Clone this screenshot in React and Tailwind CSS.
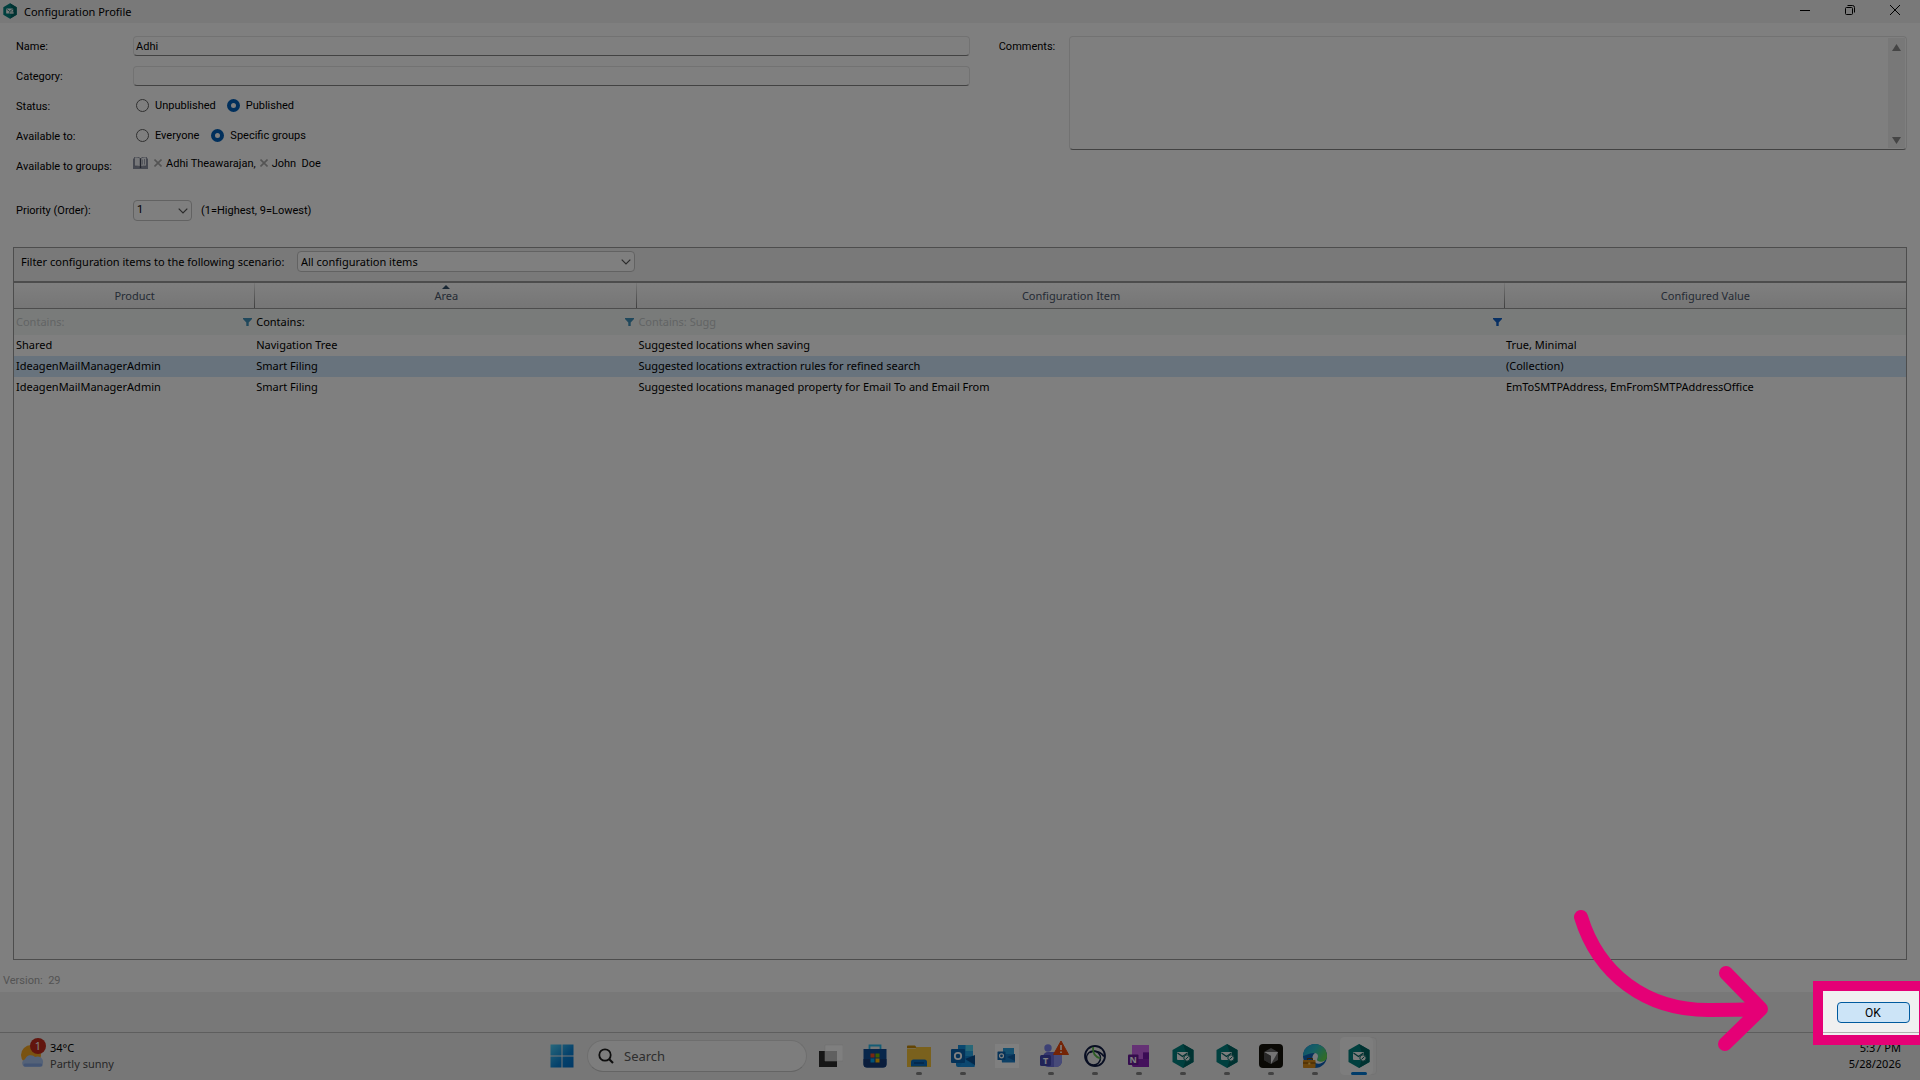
import React from "react";

const FONT = "font-['Noto_Sans','Open_Sans',sans-serif]";
const FORM = "font-['Roboto','Liberation_Sans',Arial,sans-serif]";

function HexLogo({ className, detailed = true }) {
  return (
    <svg viewBox="0 0 22 24" className={className} aria-hidden="true">
      <path d="M11 0 21.500 6v12L11 24 .5 18V6z" fill="#00807e" />
      <path d="M11 0 21.500 6v12L11 24l4-12z" fill="#006463" />
      <rect x="5" y="8" width="11" height="8" rx="1" fill="#f4f8f8" />
      <path d="m5.500 9 5 3.600L15.500 9" fill="none" stroke="#006463" strokeWidth="1.200" />
      {detailed && (
        <>
          <circle cx="15" cy="14" r="3.200" fill="#f4f8f8" stroke="#006463" strokeWidth="1" />
          <path d="m13.400 15.500 3.200-3" stroke="#006463" strokeWidth="1" />
        </>
      )}
      {!detailed && <path d="M10 13.500h7v3h-7z" fill="#f4f8f8" stroke="#006463" strokeWidth=".8" />}
    </svg>
  );
}

function Funnel({ className }) {
  return (
    <svg viewBox="0 0 9 8" className={className} aria-hidden="true">
      <path d="M0 0h9v1L5.700 4.500V8H3.300V4.500L0 1z" fill="currentColor" />
    </svg>
  );
}

function Chevron({ className }) {
  return (
    <svg viewBox="0 0 10 6" className={className} aria-hidden="true">
      <path d="m.7.7 4.300 4.300L9.300.7" fill="none" stroke="currentColor" strokeWidth="1.200" />
    </svg>
  );
}

function Radio({ name, label, defaultChecked }) {
  return (
    <label className="flex items-center gap-1.5">
      <input
        type="radio"
        name={name}
        defaultChecked={defaultChecked}
        className="size-[13px] appearance-none rounded-full border border-[#606060] bg-white checked:border-4 checked:border-[#005fb8]"
      />
      <span className="pt-0.5">{label}</span>
    </label>
  );
}

function TitleBar() {
  return (
    <header className="flex h-[23px] items-start bg-[#f2f2f2] text-[11px] text-black">
      <HexLogo className="mt-[3px] ml-[3px] h-4 w-[14px]" detailed={false} />
      <h1 className="ml-[7px] flex-1 leading-6">Configuration Profile</h1>
      <button aria-label="Minimize" className="grid h-5 w-[45px] place-items-center">
        <svg viewBox="0 0 10 10" className="size-2.5"><path d="M0 5.500h10" stroke="black" /></svg>
      </button>
      <button aria-label="Restore" className="grid h-5 w-[45px] place-items-center">
        <svg viewBox="0 0 10 10" className="size-2.5" fill="none" stroke="black">
          <rect x=".5" y="2.500" width="7" height="7" rx="1" />
          <path d="M2.500.5h5a2 2 0 0 1 2 2v5" />
        </svg>
      </button>
      <button aria-label="Close" className="mr-[3px] grid h-5 w-[45px] place-items-center">
        <svg viewBox="0 0 10 10" className="size-2.5"><path d="m0 0 10 10M10 0 0 10" stroke="black" /></svg>
      </button>
    </header>
  );
}

const FIELD = "h-5 w-full rounded-sm border border-[#e4e4e4] border-b-[#858585] bg-white px-0.5 outline-none";
const LABEL = "w-[117px] shrink-0 pt-0.5";

function Remove({ label }) {
  return (
    <button type="button" aria-label={label}>
      <svg viewBox="0 0 8 8" className="size-2"><path d="m.5.5 7 7M7.500.5l-7 7" stroke="#a8a8a8" strokeWidth="1.600" /></svg>
    </button>
  );
}

function ProfileForm() {
  return (
    <form className={`flex gap-[29px] pt-[13px] pr-[13px] text-[11px] text-black ${FORM}`}>
      <div className="min-w-0 flex-[21] pl-4">
        <div className="flex h-5 items-center">
          <label htmlFor="name" className={LABEL}>Name:</label>
          <input id="name" defaultValue="Adhi" className={FIELD} />
        </div>
        <div className="mt-2.5 flex h-5 items-center">
          <label htmlFor="category" className={LABEL}>Category:</label>
          <input id="category" className={FIELD} />
        </div>
        <div role="radiogroup" aria-label="Status" className="mt-2.5 flex h-5 items-center">
          <span className={LABEL}>Status:</span>
          <div className="flex gap-[11px] pb-0.5 pl-[3px]">
            <Radio name="status" label="Unpublished" />
            <Radio name="status" label="Published" defaultChecked />
          </div>
        </div>
        <div role="radiogroup" aria-label="Available to" className="mt-2.5 flex h-5 items-center">
          <span className={LABEL}>Available to:</span>
          <div className="flex gap-3 pb-0.5 pl-[3px]">
            <Radio name="audience" label="Everyone" />
            <Radio name="audience" label="Specific groups" defaultChecked />
          </div>
        </div>
        <div className="mt-2.5 flex h-5 items-center">
          <span className={LABEL}>Available to groups:</span>
          <div className="flex items-center pb-1.5">
            <button type="button" aria-label="Browse groups" className="mr-1.5">
              <svg viewBox="0 0 15 12" className="h-3 w-[15px]">
                <path d="M0 1.500h15V12H0z" fill="#8d93a3" />
                <path d="M1.500 0C4 0 6 .3 7.500 1.500V10C6 9 4 9 1.500 9zM13.500 0C11 0 9 .3 7.500 1.500V10c1.500-1 3.500-1 6-1z" fill="#eef0f5" stroke="#777b8c" strokeWidth=".7" />
                <path d="M7.500 1.500V11" stroke="#44485a" strokeWidth="1.400" />
                <path d="M9.300 2.500v5M11.500 2v5.500" stroke="#8a8fa0" strokeWidth=".8" />
              </svg>
            </button>
            <Remove label="Remove Adhi Theawarajan" />
            <span className="mr-1 ml-1 pt-0.5">Adhi Theawarajan,</span>
            <Remove label="Remove John Doe" />
            <span className="ml-1 pt-0.5 whitespace-pre">John  Doe</span>
          </div>
        </div>
        <div className="mt-6 flex h-5 items-center">
          <label htmlFor="priority" className={LABEL}>Priority (Order):</label>
          <div className="relative">
            <select id="priority" className="h-[21px] w-[59px] appearance-none rounded-sm border border-[#c4c4c4] bg-white pt-px pl-[3px]">
              <option>1</option>
              <option>2</option>
            </select>
            <Chevron className="pointer-events-none absolute top-2 right-1 h-1.5 w-2.5 text-[#555]" />
          </div>
          <span className="ml-[9px] pt-0.5">(1=Highest, 9=Lowest)</span>
        </div>
      </div>
      <div className="flex min-w-0 flex-[20] items-start">
        <label htmlFor="comments" className="w-[70px] shrink-0 pt-[3px]">Comments:</label>
        <div className="flex h-[114px] flex-1 rounded-sm border border-[#e4e4e4] border-b-[#858585] bg-white p-px">
          <textarea id="comments" className="h-full flex-1 resize-none outline-none" />
          <div className="flex w-[17px] flex-col items-center justify-between bg-[#f0f0f0] pt-1.5 pb-1" aria-hidden="true">
            <svg viewBox="0 0 9 7" className="h-[7px] w-[9px]"><path d="M4.500 0 9 7H0z" fill="#8a8a8a" /></svg>
            <svg viewBox="0 0 9 7" className="h-[7px] w-[9px]"><path d="M4.500 7 9 0H0z" fill="#8a8a8a" /></svg>
          </div>
        </div>
      </div>
    </form>
  );
}

const ROWS = [
  ["Shared", "Navigation Tree", "Suggested locations when saving", "True, Minimal"],
  ["IdeagenMailManagerAdmin", "Smart Filing", "Suggested locations extraction rules for refined search", "(Collection)"],
  ["IdeagenMailManagerAdmin", "Smart Filing", "Suggested locations managed property for Email To and Email From", "EmToSMTPAddress, EmFromSMTPAddressOffice"],
];

const HEAD = "border-b border-[#9a9a9a] bg-gradient-to-b from-white to-[#ececec] p-0 pt-0.5 font-normal";

function Separator() {
  return <span className="absolute inset-y-0 right-0 w-px bg-gradient-to-b from-[#eee] to-[#808080]" />;
}

function ItemsPanel() {
  return (
    <section className="mx-[13px] flex flex-1 flex-col border border-[#9a9a9a] bg-white text-[11px] text-black">
      <div className="flex h-[35px] items-start border-b-2 border-[#9a9a9a] bg-[#f2f2f2] pt-[3px] pl-[7px]">
        <label htmlFor="scenario" className="w-[276px] pt-[3px]">Filter configuration items to the following scenario:</label>
        <div className="relative">
          <select id="scenario" className="h-[21px] w-[338px] appearance-none rounded-sm border border-[#c4c4c4] bg-white pt-px pl-[3px]">
            <option>All configuration items</option>
          </select>
          <Chevron className="pointer-events-none absolute top-2 right-1 h-1.5 w-2.5 text-[#555]" />
        </div>
      </div>
      <table className="w-full table-fixed border-separate border-spacing-0 text-left">
        <colgroup>
          <col className="w-[12.75%]" />
          <col className="w-[20.2%]" />
          <col className="w-[45.85%]" />
          <col className="w-[21.2%]" />
        </colgroup>
        <thead>
          <tr className="h-[26px] text-center text-[#4a566a]">
            <th className={`relative ${HEAD}`}>Product<Separator /></th>
            <th className={`relative ${HEAD}`}>
              <svg viewBox="0 0 8 4" className="absolute top-0.5 left-1/2 h-1 w-2 -translate-x-1/2" aria-hidden="true"><path d="M4 0 8 4H0z" fill="#34516b" /></svg>
              Area
              <Separator />
            </th>
            <th className={`relative ${HEAD}`}>Configuration Item<Separator /></th>
            <th className={HEAD}>Configured Value</th>
          </tr>
        </thead>
        <tbody>
          <tr className="h-[26px] bg-[#f3f7f4]">
            <td className="p-0 pr-[3px] pl-0.5">
              <div className="flex items-center justify-between text-[#c4c8ca]">Contains:<Funnel className="h-2 w-[9px] text-[#4090b8]" /></div>
            </td>
            <td className="p-0 pr-[3px] pl-px">
              <div className="flex items-center justify-between">Contains:<Funnel className="h-2 w-[9px] text-[#4090b8]" /></div>
            </td>
            <td className="p-0 pr-[3px] pl-px">
              <div className="flex items-center justify-between text-[#c4c8ca]">Contains: Sugg<Funnel className="h-2 w-[9px] text-[#1060c8]" /></div>
            </td>
            <td className="p-0" />
          </tr>
          {ROWS.map((row, i) => (
            <tr key={i} className={i === 1 ? "h-[21px] bg-[#d0e6fb]" : "h-[21px]"}>
              {row.map((cell, j) => (
                <td key={j} className={j === 0 ? "truncate p-0 pl-0.5" : "truncate p-0 pl-px"}>{cell}</td>
              ))}
            </tr>
          ))}
        </tbody>
      </table>
    </section>
  );
}

function Callout() {
  return (
    <div className="absolute right-0 bottom-[-13px] z-20 h-16 w-[107px] border-[10px] border-r border-[#e50076] bg-[#f0f0f0]">
      <div className="flex h-[42px] items-center justify-center border-b border-[#b0b0b0] pt-0.5 pl-1">
        <button className={`h-[21px] w-[73px] rounded border border-[#005a9e] bg-[#cce4f7] text-[12px] text-black ${FORM}`}>OK</button>
      </div>
    </div>
  );
}

function Arrow() {
  return (
    <svg viewBox="0 0 200 146" className="pointer-events-none absolute right-[149px] bottom-[-21px] z-20 h-[146px] w-[200px]" fill="none" stroke="#e50076" strokeWidth="14" strokeLinecap="round" strokeLinejoin="round" aria-hidden="true">
      <path d="M10 10C27 66 74 104 140 103Q165 103 188 102M155 66l35 36-36 35" />
    </svg>
  );
}

function Glyph({ children }) {
  return <svg viewBox="0 0 24 24" className="size-6" aria-hidden="true">{children}</svg>;
}

function Letter({ x, y, children, size = 9 }) {
  return (
    <text x={x} y={y} textAnchor="middle" fontSize={size} fontWeight="700" fill="white" fontFamily="Noto Sans">{children}</text>
  );
}

const StartIcon = () => (
  <Glyph>
    <defs>
      <linearGradient id="start" x1="0" y1="0" x2="1" y2="1">
        <stop offset="0" stopColor="#4fd0f8" />
        <stop offset=".6" stopColor="#0a84d8" />
        <stop offset="1" stopColor="#0070cc" />
      </linearGradient>
    </defs>
    <path d="M.5.5h11v11H.5zM12.500.5h11v11h-11zM.5 12.500h11v11H.5zM12.500 12.500h11v11h-11z" fill="url(#start)" />
  </Glyph>
);

const TaskViewIcon = () => (
  <Glyph>
    <path d="M0 7h18v16H0z" fill="#2c2c2c" />
    <path d="M6 1h18v16H6z" fill="#ffffff" stroke="#d8d8d8" strokeWidth=".5" />
    <path d="M6 7h12v10H6z" fill="#c0c0c0" />
  </Glyph>
);

const StoreIcon = () => (
  <Glyph>
    <path d="M6.500 6V1.500h11V6" fill="none" stroke="#28b8ea" strokeWidth="1.800" />
    <path d="M.5 5h23v15a3.500 3.500 0 0 1-3.500 3.500H4A3.500 3.500 0 0 1 .5 20z" fill="#0f4c96" />
    <path d="M.5 15h23v5a3.500 3.500 0 0 1-3.500 3.500H4A3.500 3.500 0 0 1 .5 20z" fill="#143a78" />
    <path d="M7.500 9.500h4v4h-4z" fill="#f25022" />
    <path d="M12.500 9.500h4v4h-4z" fill="#7fba00" />
    <path d="M7.500 14.500h4v4h-4z" fill="#00a4ef" />
    <path d="M12.500 14.500h4v4h-4z" fill="#ffb900" />
  </Glyph>
);

const FolderIcon = () => (
  <Glyph>
    <path d="M0 2.500C0 2 .5 1.500 1 1.500h7l2 2.500H0z" fill="#c78a08" />
    <path d="M0 4.500h8.500L10 3h14v20H0z" fill="#f5c33a" />
    <path d="M4 22.500V18a2.500 2.500 0 0 1 2.500-2.500h11A2.500 2.500 0 0 1 20 18v4.500z" fill="#0a6fc2" />
    <path d="M7 19h10" stroke="#0a3f80" strokeWidth="1.200" />
  </Glyph>
);

const OutlookIcon = () => (
  <Glyph>
    <path d="M7 1h15v12H7z" fill="#1490df" />
    <path d="M14.500 1H22v6h-7.500z" fill="#50d0f0" />
    <path d="M14.500 7H22v6h-7.500z" fill="#28a8ea" />
    <path d="M5 12h19v9a2 2 0 0 1-2 2H7a2 2 0 0 1-2-2z" fill="#1188d8" />
    <path d="m14 15 10-4v10z" fill="#0b4f90" />
    <path d="m14 15 10 8H8z" fill="#1a90e0" />
    <rect x="0" y="5" width="14" height="14" rx="1" fill="#0a64b0" />
    <circle cx="7" cy="12" r="3.200" fill="none" stroke="white" strokeWidth="1.800" />
  </Glyph>
);

const MailIcon = () => (
  <Glyph>
    <path d="M0 0h24v24H0z" fill="#ffffff" />
    <path d="M8 4h11v8H8z" fill="#2aa0e0" />
    <path d="M6 10h14v8.500H7z" fill="#1a80cc" />
    <path d="m12 13 8-3v7z" fill="#0d5ea6" />
    <rect x="2.500" y="7.500" width="8" height="8.500" rx=".6" fill="#0a64b0" />
    <circle cx="6.500" cy="11.800" r="2" fill="none" stroke="white" strokeWidth="1.200" />
  </Glyph>
);

const TeamsIcon = () => (
  <svg viewBox="0 0 30 28" className="-mt-1 ml-1.5 h-7 w-[30px]" aria-hidden="true">
    <circle cx="9" cy="8" r="3.700" fill="#7b83eb" />
    <path d="M9 12h12a2 2 0 0 1 2 2v7a6 6 0 0 1-6 6H9a5 5 0 0 1-5-5v-5a5 5 0 0 1 5-5z" fill="#6a6fdc" />
    <path d="M15 12h6a2 2 0 0 1 2 2v7a6 6 0 0 1-6 6h-2z" fill="#8f94f0" />
    <rect x="1" y="15" width="11" height="11" rx="1.500" fill="#4349b0" />
    <Letter x={6.500} y={24}>T</Letter>
    <path d="M22 1 29.500 14.500h-15z" fill="#e8480c" stroke="#e8480c" strokeWidth="1" strokeLinejoin="round" />
    <path d="M22 5v5M22 11.500v1.600" stroke="white" strokeWidth="1.600" />
  </svg>
);

const OrbitIcon = () => (
  <Glyph>
    <circle cx="12" cy="12" r="10" fill="none" stroke="#101c44" strokeWidth="1.800" />
    <circle cx="10.500" cy="14" r="7" fill="none" stroke="#101c44" strokeWidth="1.500" />
    <path d="M7 8.500c5-2.500 11-1 14 4" fill="none" stroke="#101c44" strokeWidth="1.500" />
    <path d="M10 3c-.5 6 2.500 10 7.500 11.500" fill="none" stroke="#58b848" strokeWidth="1.800" />
  </Glyph>
);

const OneNoteIcon = () => (
  <Glyph>
    <path d="M5 1h17v22H7a2 2 0 0 1-2-2z" fill="#ca64ea" />
    <path d="M16 8h6v6h-6z" fill="#9332bf" />
    <path d="M5 15h17v8H7a2 2 0 0 1-2-2z" fill="#8a22b8" />
    <path d="M16 9h6v6h-6z" fill="#7719aa" />
    <rect x="1" y="10.500" width="10.500" height="10.500" rx="1" fill="#6b1a9a" />
    <Letter x={6.200} y={19}>N</Letter>
  </Glyph>
);

const CursorIcon = () => (
  <Glyph>
    <rect width="24" height="24" rx="4" fill="#14120b" />
    <path d="m12 4 7 4v8l-7 4-7-4V8z" fill="#6c6c6c" />
    <path d="M5 8h14l-7 12v-8z" fill="#e8e8e8" />
    <path d="m5 8 7 4v8l-7-4z" fill="#505050" />
  </Glyph>
);

const EdgeIcon = () => (
  <Glyph>
    <defs>
      <linearGradient id="edge" x1="0" y1="0" x2="1" y2=".6">
        <stop offset="0" stopColor="#1c9ee0" />
        <stop offset=".5" stopColor="#2cc0c8" />
        <stop offset="1" stopColor="#62d850" />
      </linearGradient>
    </defs>
    <circle cx="12" cy="12" r="12" fill="#0f62b8" />
    <path d="M0 12a12 12 0 0 1 24 0c0 4-3 6-6 6s-4.500-1.500-4-3c2-2 1-6-3-6-5 0-9 3-11 3z" fill="url(#edge)" />
    <path d="M12 9c3 .5 4 3 2 6.500 0 2 4 3.500 8 1-2 3-6.500 4-9.500 2.500-4-2-4-8-.5-10z" fill="#f4f8fc" />
    <path d="M4.500 16v-1.500h5V16" fill="none" stroke="#6a3f08" />
    <rect x="0" y="16" width="12.500" height="8" rx=".8" fill="#d88a18" />
    <path d="M0 19h12.500" stroke="#8a5208" strokeWidth="1.200" />
    <path d="M5.300 18.500h2v2h-2z" fill="#ffd060" />
  </Glyph>
);

const Hex = () => <HexLogo className="h-6 w-[22px]" />;

const APPS = [
  { label: "Task view", Icon: TaskViewIcon },
  { label: "Store", Icon: StoreIcon },
  { label: "File Explorer", Icon: FolderIcon, running: true },
  { label: "Outlook", Icon: OutlookIcon, running: true },
  { label: "Outlook (new)", Icon: MailIcon },
  { label: "Teams", Icon: TeamsIcon, running: true },
  { label: "Secure client", Icon: OrbitIcon, running: true },
  { label: "OneNote", Icon: OneNoteIcon, running: true },
  { label: "Mail Manager", Icon: Hex, running: true },
  { label: "Mail Manager Admin", Icon: Hex, running: true },
  { label: "Cursor", Icon: CursorIcon, running: true },
  { label: "Edge", Icon: EdgeIcon, running: true },
  { label: "Configuration Profile", Icon: Hex, running: true, active: true },
];

function AppButton({ label, Icon, running, active }) {
  return (
    <button aria-label={label} className="relative grid size-11 place-items-center">
      {active && (
        <>
          <span className="absolute inset-y-[3px] right-1 left-1 rounded border border-[#e6e6e6] bg-[#f2f2f2]" />
          <span className="absolute inset-y-[3px] right-2 left-[3px] rounded border border-[#fafafa] bg-[#fafafa]" />
        </>
      )}
      <span className="relative"><Icon /></span>
      {running && <span className={`absolute bottom-[3px] h-[3px] rounded-full ${active ? "w-4 bg-[#0078d4]" : "w-1.5 bg-[#858585]"}`} />}
    </button>
  );
}

function Taskbar() {
  return (
    <footer className="flex h-12 items-center border-t border-[#bcbcbc] bg-[#eeeeee] pb-0.5 text-[11px] leading-4 text-black">
      <button className="flex flex-1 items-center pl-5 text-left">
        <span className="relative">
          <svg viewBox="0 0 24 24" className="size-6" aria-hidden="true">
            <circle cx="11" cy="11" r="10" fill="#f5a623" />
            <path d="M6 23a4 4 0 0 1-1-7.800 6 6 0 0 1 10-2.200 5 5 0 0 1 5 10z" fill="#a9c4f0" />
            <path d="M5 21h16" stroke="#86a8e6" strokeWidth="3" strokeLinecap="round" />
          </svg>
          <span className="absolute -top-1.5 left-2.5 size-4 rounded-full bg-[#c42b1c] text-center text-white">1</span>
        </span>
        <span className="ml-1.5">
          <span className="block">34°C</span>
          <span className="block text-[#505050]">Partly sunny</span>
        </span>
      </button>
      <nav aria-label="Taskbar" className="flex items-center">
        <button aria-label="Start" className="grid size-11 place-items-center"><StartIcon /></button>
        <label className="mr-0.5 ml-[3px] flex h-8 w-[220px] items-center gap-2.5 rounded-full border border-[#dcdcdc] border-b-[#c8c8c8] bg-[#fafafa] pl-2.5">
          <svg viewBox="0 0 16 16" className="size-4" fill="none" stroke="#1c1c1c" strokeWidth="1.800" aria-hidden="true">
            <circle cx="7" cy="7" r="5.700" />
            <path d="m11 11 4 4" strokeWidth="2.200" />
          </svg>
          <input aria-label="Search" placeholder="Search" className="w-40 text-[13px] outline-none placeholder:text-[#5c5c5c]" />
        </label>
        {APPS.map((app) => <AppButton key={app.label} {...app} />)}
      </nav>
      <div className="flex-1 pr-[19px] text-right">
        <div>5:37 PM</div>
        <div>5/28/2026</div>
      </div>
    </footer>
  );
}

export default function App() {
  return (
    <div className={`relative flex min-h-screen flex-col bg-white ${FONT}`}>
      <TitleBar />
      <main className="flex flex-1 flex-col">
        <ProfileForm />
        <div className="h-[27px]" />
        <ItemsPanel />
        <p className={`h-8 pt-[13px] pl-[3px] text-[11px] text-[#a8a8a8] ${FORM}`}>Version:&nbsp; 29</p>
      </main>
      <div className="relative h-10 bg-[#f0f0f0]">
        <Arrow />
        <Callout />
      </div>
      <Taskbar />
      <div className="pointer-events-none absolute inset-0 z-10 bg-black/50" />
    </div>
  );
}
